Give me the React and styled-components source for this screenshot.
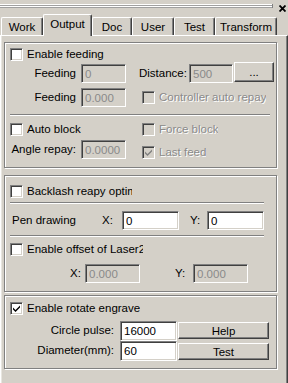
import React from "react";
import styled, { createGlobalStyle } from "styled-components";

const GlobalStyle = createGlobalStyle`
  html, body {
    margin: 0;
    padding: 0;
    background: #d4d0c8;
  }
  body {
    font-family: "Liberation Sans", Arial, sans-serif;
    font-size: 11px;
    color: #000;
  }
`;

const Window = styled.div`
  width: 288px;
  height: 383px;
  overflow: hidden;
  background: #d4d0c8;
  display: flex;
  flex-direction: column;
`;

const TitleBar = styled.div`
  height: 13px;
  display: flex;
  align-items: flex-start;
`;

const Gripper = styled.div`
  margin-top: 4px;
  width: 272px;
  height: 4px;
  border-right: 1px solid #808080;
  background: linear-gradient(
    to bottom,
    #ffffff 0 1px,
    #a0a0a0 1px 2px,
    #ffffff 2px 3px,
    #a0a0a0 3px 4px
  );
`;

const CloseButton = styled.div`
  margin: 5px 0 0 6px;
  width: 7px;
  height: 7px;
  display: flex;
`;

const TabStrip = styled.div`
  height: 22px;
  display: flex;
  align-items: flex-end;
  padding-left: 1px;
  position: relative;
  z-index: 1;
`;

const Tab = styled.div`
  box-sizing: border-box;
  width: ${(p) => p.$w}px;
  height: ${(p) => (p.$active ? 22 : 18)}px;
  margin-bottom: ${(p) => (p.$active ? -1 : 0)}px;
  border-top: 1px solid #fff;
  border-left: 1px solid #fff;
  border-right: 1px solid #404040;
  box-shadow: inset -1px 0 0 #808080;
  border-radius: 2px 2px 0 0;
  background: #d4d0c8;
  display: flex;
  justify-content: center;
  padding-top: 3px;
  line-height: 13px;
  font-size: 11.5px;
`;

const Panel = styled.div`
  flex: 1;
  box-sizing: border-box;
  border-top: 1px solid #fff;
  border-left: 1px solid #fff;
  border-right: 1px solid #404040;
  box-shadow: inset -1px 0 0 #808080, inset 1px 0 0 #e8e6e0;
  padding: 6px 0 0 3px;
  display: flex;
  flex-direction: column;
`;

const Group = styled.div`
  box-sizing: border-box;
  width: 273px;
  margin-top: ${(p) => p.$mt || 0}px;
  border: 1px solid #808080;
  box-shadow: inset 1px 1px 0 #fff, 1px 1px 0 #fff;
  padding: ${(p) => p.$pt}px 0 ${(p) => p.$pb}px 5px;
  display: flex;
  flex-direction: column;
`;

const Row = styled.div`
  display: flex;
  align-items: flex-start;
  height: ${(p) => p.$h}px;
  margin-top: ${(p) => p.$mt || 0}px;
`;

const Cell = styled.div`
  width: ${(p) => p.$w}px;
  flex: none;
`;

const Label = styled.div`
  flex: none;
  width: ${(p) => (p.$w ? `${p.$w}px` : "auto")};
  margin-left: ${(p) => p.$ml || 0}px;
  margin-top: ${(p) => p.$mt || 0}px;
  padding-left: ${(p) => p.$pl || 0}px;
  text-align: ${(p) => (p.$right ? "right" : "left")};
  line-height: 19px;
  font-size: 11.5px;
  white-space: nowrap;
`;

const Field = styled.input`
  flex: none;
  box-sizing: border-box;
  width: ${(p) => p.$w}px;
  height: ${(p) => p.$h || 19}px;
  margin: ${(p) => p.$mt || 0}px 0 0 ${(p) => p.$ml || 0}px;
  padding: 0 0 0 3px;
  border: 1px solid;
  border-color: #808080 #fff #fff #808080;
  box-shadow: inset 1px 1px 0 #404040, inset -1px -1px 0 #d4d0c8;
  background: ${(p) => (p.disabled ? "#d4d0c8" : "#fff")};
  color: ${(p) => (p.disabled ? "#8a8a8a" : "#000")};
  -webkit-text-fill-color: ${(p) => (p.disabled ? "#8a8a8a" : "#000")};
  opacity: 1;
  font-family: "Liberation Sans", Arial, sans-serif;
  font-size: 11.5px;
  outline: none;
`;

const Button = styled.div`
  flex: none;
  box-sizing: border-box;
  width: ${(p) => p.$w}px;
  height: ${(p) => p.$h}px;
  margin: ${(p) => p.$mt || 0}px 0 0 ${(p) => p.$ml || 0}px;
  border: 1px solid;
  border-color: #fff #404040 #404040 #fff;
  box-shadow: inset -1px -1px 0 #808080;
  background: #d4d0c8;
  display: flex;
  align-items: center;
  justify-content: center;
  font-size: 11.5px;
`;

const Separator = styled.div`
  width: ${(p) => p.$w}px;
  height: 0;
  margin-top: ${(p) => p.$mt}px;
  border-top: 1px solid #808080;
  border-bottom: 1px solid #fff;
`;

const CheckWrap = styled.div`
  flex: none;
  display: flex;
  align-items: center;
  gap: 4px;
  margin-left: ${(p) => p.$ml || 0}px;
  margin-top: ${(p) => p.$mt || 0}px;
  color: ${(p) => (p.$disabled ? "#8a8a8a" : "#000")};
  text-shadow: ${(p) => (p.$disabled ? "1px 1px 0 #fff" : "none")};
  font-size: 11.5px;
  line-height: 13px;
`;

const Box = styled.div`
  box-sizing: border-box;
  width: 13px;
  height: 13px;
  flex: none;
  border: 1px solid;
  border-color: #808080 #fff #fff #808080;
  box-shadow: inset 1px 1px 0 #404040, inset -1px -1px 0 #d4d0c8;
  background: ${(p) => (p.$disabled ? "#d4d0c8" : "#fff")};
  display: flex;
  align-items: center;
  justify-content: center;
`;

const CheckText = styled.span`
  white-space: nowrap;
  overflow: hidden;
  max-width: ${(p) => (p.$clip ? `${p.$clip}px` : "none")};
`;

function CheckBox({ label, checked, disabled, ml, mt, clip }) {
  return (
    <CheckWrap $ml={ml} $mt={mt} $disabled={disabled}>
      <Box $disabled={disabled}>
        {checked && (
          <svg width="9" height="9" viewBox="0 0 9 9">
            <path
              d="M1 3.5 L3.5 6 L8 1.5 L8 3.5 L3.5 8 L1 5.5 Z"
              fill={disabled ? "#808080" : "#000"}
            />
          </svg>
        )}
      </Box>
      <CheckText $clip={clip}>{label}</CheckText>
    </CheckWrap>
  );
}

const tabs = [
  { name: "Work", w: 42 },
  { name: "Output", w: 49, active: true },
  { name: "Doc", w: 40 },
  { name: "User", w: 42 },
  { name: "Test", w: 41 },
  { name: "Transform", w: 62 },
];

export default function App() {
  return (
    <Window>
      <GlobalStyle />
      <TitleBar>
        <Gripper />
        <CloseButton>
          <svg width="7" height="7" viewBox="0 0 7 7">
            <path d="M0.5 0.5 L6.5 6.5 M6.5 0.5 L0.5 6.5" stroke="#000" strokeWidth="1.8" />
          </svg>
        </CloseButton>
      </TitleBar>
      <TabStrip>
        {tabs.map((t) => (
          <Tab key={t.name} $w={t.w} $active={t.active}>
            {t.name}
          </Tab>
        ))}
      </TabStrip>
      <Panel>
        <Group $pt={5} $pb={8}>
          <Row $h={13}>
            <CheckBox label="Enable feeding" />
          </Row>
          <Row $h={21} $mt={1}>
            <Label $w={66} $right $mt={2}>Feeding</Label>
            <Field $w={45} $ml={5} $mt={2} disabled value="0" readOnly />
            <Label $w={50} $ml={13} $mt={2}>Distance:</Label>
            <Field $w={44} $mt={2} disabled value="500" readOnly />
            <Button $w={40} $h={20} $ml={1}>...</Button>
          </Row>
          <Row $h={19} $mt={5}>
            <Label $w={66} $right>Feeding</Label>
            <Field $w={45} $ml={5} disabled value="0.000" readOnly />
            <CheckBox label="Controller auto repay" disabled ml={16} mt={3} />
          </Row>
          <Separator $w={260} $mt={7} />
          <Row $h={13} $mt={7}>
            <Cell $w={132}>
              <CheckBox label="Auto block" />
            </Cell>
            <CheckBox label="Force block" disabled />
          </Row>
          <Row $h={19} $mt={4}>
            <Label $w={66} $right>Angle repay:</Label>
            <Field $w={45} $ml={5} disabled value="0.0000" readOnly />
            <CheckBox label="Last feed" checked disabled ml={16} mt={6} />
          </Row>
        </Group>

        <Group $mt={7} $pt={9} $pb={8}>
          <Row $h={13}>
            <CheckBox label="Backlash reapy optimize" clip={105} />
          </Row>
          <Separator $w={254} $mt={4} />
          <Row $h={19} $mt={7}>
            <Label $w={90} $pl={2}>Pen drawing</Label>
            <Label $w={20}>X:</Label>
            <Field $w={57} value="0" readOnly />
            <Label $w={17} $ml={11}>Y:</Label>
            <Field $w={57} value="0" readOnly />
          </Row>
          <Separator $w={254} $mt={5} />
          <Row $h={13} $mt={6}>
            <CheckBox label="Enable offset of Laser2" clip={116} />
          </Row>
          <Row $h={19} $mt={8}>
            <Cell $w={60} />
            <Label $w={15}>X:</Label>
            <Field $w={55} disabled value="0.000" readOnly />
            <Label $w={18} $ml={35}>Y:</Label>
            <Field $w={55} disabled value="0.000" readOnly />
          </Row>
        </Group>

        <Group $mt={3} $pt={6} $pb={7}>
          <Row $h={13}>
            <CheckBox label="Enable rotate engrave" checked />
          </Row>
          <Row $h={20} $mt={6}>
            <Label $w={104} $right>Circle pulse:</Label>
            <Field $w={57} $h={20} $ml={6} value="16000" readOnly />
            <Button $w={91} $h={17} $ml={1} $mt={1}>Help</Button>
          </Row>
          <Row $h={20}>
            <Label $w={104} $right>Diameter(mm):</Label>
            <Field $w={57} $h={20} $ml={6} value="60" readOnly />
            <Button $w={91} $h={17} $ml={1} $mt={2}>Test</Button>
          </Row>
        </Group>
      </Panel>
    </Window>
  );
}
